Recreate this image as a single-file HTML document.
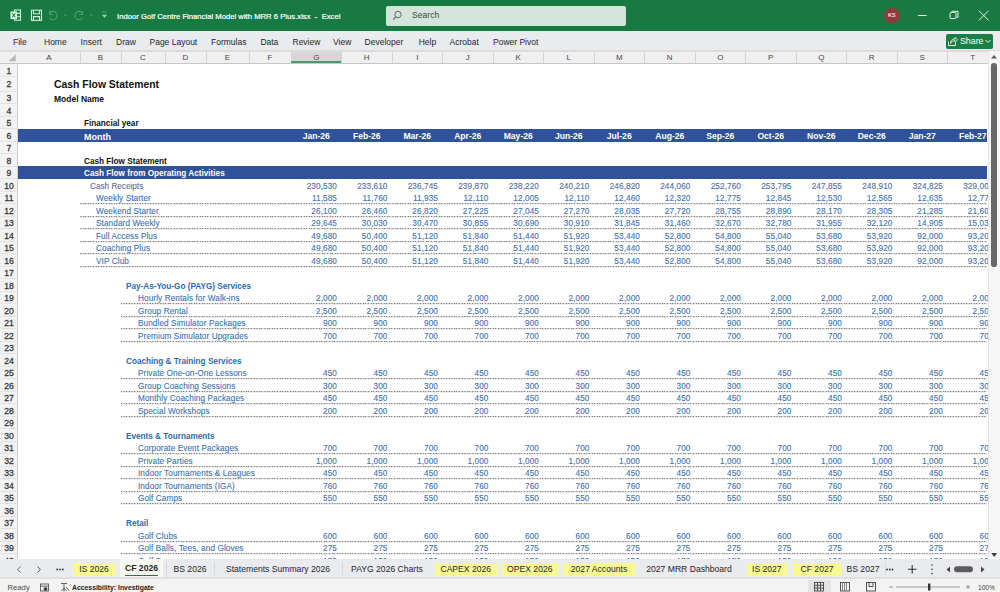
<!DOCTYPE html><html><head><meta charset="utf-8"><style>
*{margin:0;padding:0;box-sizing:border-box}
html,body{width:1000px;height:592px;overflow:hidden;background:#fff;font-family:"Liberation Sans",sans-serif}
.a{position:absolute;white-space:nowrap}
#tb{position:absolute;left:0;top:0;width:1000px;height:31px;background:#187a42}
#rb{position:absolute;left:0;top:31px;width:1000px;height:19px;background:#e9ebef}
#ch{position:absolute;left:0;top:50px;width:1000px;height:14px;background:#f0f0f0;border-top:2px solid #dcdcdc;border-bottom:1px solid #c6c6c6}
#rh{position:absolute;left:0;top:64px;width:18px;height:495px;background:#f3f3f3;border-right:1px solid #cfcfcf}
#sh{position:absolute;left:18px;top:64px;width:970px;height:495px;overflow:hidden;background:#fff}
.rb{font-size:8.5px;color:#262626;top:37px}
.cl{font-size:8px;color:#444;text-align:center;top:52.5px;height:10px;line-height:10px}
.rn{font-size:8.6px;color:#3a3a3a;padding-top:1px;-webkit-text-stroke:0.3px #3a3a3a;text-align:center;width:18px;left:0}
.band{position:absolute;left:0;width:969px;background:#2f529a}
.t{font-size:8.2px;line-height:12.5px;height:12.5px;padding-top:2px}
.title{font-size:10.4px;font-weight:bold;color:#111}
.bk{font-weight:bold;color:#111}
.wh{font-weight:bold;color:#fff}
.gb{color:#63709a;-webkit-text-stroke:0.12px #63709a}
.bl{color:#3f74b4;-webkit-text-stroke:0.12px #3f74b4;letter-spacing:0.1px}
.sh{font-weight:bold;color:#2e6bb0}
.n{font-size:8.2px;line-height:12.5px;height:12.5px;padding-top:2px;text-align:right;color:#4274b2;-webkit-text-stroke:0.12px #4274b2;letter-spacing:0.1px}
.m{font-size:8.6px;line-height:12.5px;height:12.5px;padding-top:1px;text-align:center;color:#fff;font-weight:bold}
.dot{position:absolute;height:1px;background:repeating-linear-gradient(90deg,#858585 0 1px,#d4d4d4 1px 2.6px);box-shadow:0 1px 0 #eeeeee}
#tabs{position:absolute;left:0;top:559px;width:1000px;height:18px;background:#e9ebef}
#sb{position:absolute;left:0;top:579px;width:1000px;height:13px;background:#f3f3f3}
.tab{position:absolute;top:4px;height:13px;line-height:13px;font-size:8.6px;color:#262626;text-align:center}
.y{background:#f6fa8f}
.ng{color:#4f6ea3;-webkit-text-stroke:0.12px #4f6ea3}
</style></head><body>

<div id="tb"></div>
<div class="a" style="left:117px;top:11.5px;font-size:7.7px;color:#fff;-webkit-text-stroke:0.2px #fff;line-height:10px">Indoor Golf Centre Financial Model with MRR 6 Plus.xlsx&nbsp; -&nbsp; Excel</div>
<div class="a" style="left:385.5px;top:5.5px;width:240px;height:20px;background:#d5e4da;border-radius:2px"></div>
<div class="a" style="left:412px;top:10px;font-size:8.6px;color:#3b4a40;line-height:10px">Search</div>
<div class="a" style="left:884px;top:7.5px;width:15.5px;height:15.5px;border-radius:50%;background:#8e3c3a"></div>
<div class="a" style="left:884px;top:11px;width:15.5px;text-align:center;font-size:5.5px;color:#f4dede;line-height:8px;font-weight:bold">KS</div>
<svg class="a" style="left:0;top:0" width="1000" height="31" viewBox="0 0 1000 31">
<g fill="none" stroke="#c9f2d8" stroke-width="1.1">
<rect x="14.5" y="10" width="6" height="10.2"/>
<path d="M14.5 13.4h6M14.5 16.8h6"/>
<rect x="31.5" y="10.2" width="10" height="10.2"/>
<path d="M33.5 10.2v3.6h6v-3.6M33.5 20.4v-3.8h6v3.8"/>
</g>
<rect x="10.5" y="11.5" width="6.5" height="7.5" fill="#d9f7e4"/>
<path d="M12.3 13.3l3 4M15.3 13.3l-3 4" stroke="#1d5e36" stroke-width="1"/>
<g fill="none" stroke="#46a36d" stroke-width="1.1">
<path d="M50 12.5a4.2 4.2 0 1 1 -0.5 5.5M49.5 11v3.5h3.5"/>
<path d="M64 15h3"/>
<path d="M82 12.5a4.2 4.2 0 1 0 0.5 5.5M82.5 11v3.5h-3.5"/>
<path d="M90 15h3"/>
<path d="M102 12h5"/>
</g>
<path d="M101.8 14.8h5.4l-2.7 3z" fill="#8fd8ab"/>
<circle cx="398" cy="14.5" r="3.2" fill="none" stroke="#5b6e62" stroke-width="1"/>
<path d="M395.8 16.8l-2.6 2.8" stroke="#5b6e62" stroke-width="1.1"/>
<path d="M918 15.5h8.5" stroke="#e6f5ec" stroke-width="1"/>
<rect x="950" y="12.5" width="6" height="6" rx="1" fill="none" stroke="#e6f5ec" stroke-width="1"/>
<path d="M952 12.5v-1.2h6v6h-1.5" fill="none" stroke="#e6f5ec" stroke-width="1"/>
<path d="M979 10.8l9.5 9.5M988.5 10.8l-9.5 9.5" stroke="#e6f5ec" stroke-width="1"/>
</svg>
<div id="rb"></div>
<div class="a rb" style="left:13px">File</div>
<div class="a rb" style="left:44px">Home</div>
<div class="a rb" style="left:80.6px">Insert</div>
<div class="a rb" style="left:116px">Draw</div>
<div class="a rb" style="left:149.5px">Page Layout</div>
<div class="a rb" style="left:211px">Formulas</div>
<div class="a rb" style="left:260.4px">Data</div>
<div class="a rb" style="left:292.5px">Review</div>
<div class="a rb" style="left:333px">View</div>
<div class="a rb" style="left:364.6px">Developer</div>
<div class="a rb" style="left:418.7px">Help</div>
<div class="a rb" style="left:449.6px">Acrobat</div>
<div class="a rb" style="left:493px">Power Pivot</div>
<div class="a" style="left:946px;top:33.5px;width:46.5px;height:15px;background:#1a7f45;border-radius:2px"></div>
<div class="a" style="left:960px;top:36px;font-size:8.8px;color:#fff;line-height:10px">Share</div>
<svg class="a" style="left:940px;top:30px" width="60" height="22" viewBox="940 30 60 22">
<path d="M948.5 41.5v4h7v-3" fill="none" stroke="#dff5e7" stroke-width="1"/>
<path d="M950.5 43.5c0-3 2-4.5 4.5-4.5v-1.6l2.6 2.4-2.6 2.4v-1.5c-2 0-3.6.8-4.5 2.8z" fill="none" stroke="#dff5e7" stroke-width="0.9"/>
<path d="M985.5 40l2.5 2.5 2.5-2.5" fill="none" stroke="#dff5e7" stroke-width="1"/>
</svg>
<div id="ch"></div>
<div class="a cl" style="left:18px;width:62px">A</div>
<div class="a" style="left:79.5px;top:52px;width:1px;height:11px;background:#d4d4d4"></div>
<div class="a cl" style="left:80px;width:41px">B</div>
<div class="a" style="left:120.5px;top:52px;width:1px;height:11px;background:#d4d4d4"></div>
<div class="a cl" style="left:121px;width:44px">C</div>
<div class="a" style="left:164.5px;top:52px;width:1px;height:11px;background:#d4d4d4"></div>
<div class="a cl" style="left:165px;width:41px">D</div>
<div class="a" style="left:205.5px;top:52px;width:1px;height:11px;background:#d4d4d4"></div>
<div class="a cl" style="left:206px;width:43px">E</div>
<div class="a" style="left:248.5px;top:52px;width:1px;height:11px;background:#d4d4d4"></div>
<div class="a cl" style="left:249px;width:42px">F</div>
<div class="a" style="left:290.5px;top:52px;width:1px;height:11px;background:#d4d4d4"></div>
<div class="a" style="left:291.0px;top:52px;width:50.5px;height:11px;background:#d9d6d8;border-bottom:2px solid #4a9a6a"></div>
<div class="a cl" style="left:291.0px;width:50.5px">G</div>
<div class="a" style="left:341.0px;top:52px;width:1px;height:11px;background:#d4d4d4"></div>
<div class="a cl" style="left:341.5px;width:50.5px">H</div>
<div class="a" style="left:391.5px;top:52px;width:1px;height:11px;background:#d4d4d4"></div>
<div class="a cl" style="left:392.0px;width:50.5px">I</div>
<div class="a" style="left:442.0px;top:52px;width:1px;height:11px;background:#d4d4d4"></div>
<div class="a cl" style="left:442.5px;width:50.5px">J</div>
<div class="a" style="left:492.5px;top:52px;width:1px;height:11px;background:#d4d4d4"></div>
<div class="a cl" style="left:493.0px;width:50.5px">K</div>
<div class="a" style="left:543.0px;top:52px;width:1px;height:11px;background:#d4d4d4"></div>
<div class="a cl" style="left:543.5px;width:50.5px">L</div>
<div class="a" style="left:593.5px;top:52px;width:1px;height:11px;background:#d4d4d4"></div>
<div class="a cl" style="left:594.0px;width:50.5px">M</div>
<div class="a" style="left:644.0px;top:52px;width:1px;height:11px;background:#d4d4d4"></div>
<div class="a cl" style="left:644.5px;width:50.5px">N</div>
<div class="a" style="left:694.5px;top:52px;width:1px;height:11px;background:#d4d4d4"></div>
<div class="a cl" style="left:695.0px;width:50.5px">O</div>
<div class="a" style="left:745.0px;top:52px;width:1px;height:11px;background:#d4d4d4"></div>
<div class="a cl" style="left:745.5px;width:50.5px">P</div>
<div class="a" style="left:795.5px;top:52px;width:1px;height:11px;background:#d4d4d4"></div>
<div class="a cl" style="left:796.0px;width:50.5px">Q</div>
<div class="a" style="left:846.0px;top:52px;width:1px;height:11px;background:#d4d4d4"></div>
<div class="a cl" style="left:846.5px;width:50.5px">R</div>
<div class="a" style="left:896.5px;top:52px;width:1px;height:11px;background:#d4d4d4"></div>
<div class="a cl" style="left:897.0px;width:50.5px">S</div>
<div class="a" style="left:947.0px;top:52px;width:1px;height:11px;background:#d4d4d4"></div>
<div class="a cl" style="left:947.5px;width:50.5px">T</div>
<div class="a" style="left:997.5px;top:52px;width:1px;height:11px;background:#d4d4d4"></div>
<svg class="a" style="left:0;top:50px" width="18" height="14" viewBox="0 50 18 14"><path d="M8.5 61.2h7.3v-7z" fill="#b9b9b9"/></svg>
<div id="rh"></div>
<div class="a rn" style="top:63.8px;height:12.5px;line-height:12.5px">1</div>
<div class="a" style="left:0;top:75.8px;width:17px;height:1px;background:#e2e2e2"></div>
<div class="a rn" style="top:76.3px;height:15px;line-height:15px">2</div>
<div class="a" style="left:0;top:90.8px;width:17px;height:1px;background:#e2e2e2"></div>
<div class="a rn" style="top:91.3px;height:12.5px;line-height:12.5px">3</div>
<div class="a" style="left:0;top:103.3px;width:17px;height:1px;background:#e2e2e2"></div>
<div class="a rn" style="top:103.8px;height:12.5px;line-height:12.5px">4</div>
<div class="a" style="left:0;top:115.8px;width:17px;height:1px;background:#e2e2e2"></div>
<div class="a rn" style="top:116.3px;height:12.5px;line-height:12.5px">5</div>
<div class="a" style="left:0;top:128.3px;width:17px;height:1px;background:#e2e2e2"></div>
<div class="a rn" style="top:128.8px;height:12.5px;line-height:12.5px">6</div>
<div class="a" style="left:0;top:140.8px;width:17px;height:1px;background:#e2e2e2"></div>
<div class="a rn" style="top:141.3px;height:12.5px;line-height:12.5px">7</div>
<div class="a" style="left:0;top:153.3px;width:17px;height:1px;background:#e2e2e2"></div>
<div class="a rn" style="top:153.8px;height:12.5px;line-height:12.5px">8</div>
<div class="a" style="left:0;top:165.8px;width:17px;height:1px;background:#e2e2e2"></div>
<div class="a rn" style="top:166.3px;height:12.5px;line-height:12.5px">9</div>
<div class="a" style="left:0;top:178.3px;width:17px;height:1px;background:#e2e2e2"></div>
<div class="a rn" style="top:178.8px;height:12.5px;line-height:12.5px">10</div>
<div class="a" style="left:0;top:190.8px;width:17px;height:1px;background:#e2e2e2"></div>
<div class="a rn" style="top:191.3px;height:12.5px;line-height:12.5px">11</div>
<div class="a" style="left:0;top:203.3px;width:17px;height:1px;background:#e2e2e2"></div>
<div class="a rn" style="top:203.8px;height:12.5px;line-height:12.5px">12</div>
<div class="a" style="left:0;top:215.8px;width:17px;height:1px;background:#e2e2e2"></div>
<div class="a rn" style="top:216.3px;height:12.5px;line-height:12.5px">13</div>
<div class="a" style="left:0;top:228.3px;width:17px;height:1px;background:#e2e2e2"></div>
<div class="a rn" style="top:228.8px;height:12.5px;line-height:12.5px">14</div>
<div class="a" style="left:0;top:240.8px;width:17px;height:1px;background:#e2e2e2"></div>
<div class="a rn" style="top:241.3px;height:12.5px;line-height:12.5px">15</div>
<div class="a" style="left:0;top:253.3px;width:17px;height:1px;background:#e2e2e2"></div>
<div class="a rn" style="top:253.8px;height:12.5px;line-height:12.5px">16</div>
<div class="a" style="left:0;top:265.8px;width:17px;height:1px;background:#e2e2e2"></div>
<div class="a rn" style="top:266.3px;height:12.5px;line-height:12.5px">17</div>
<div class="a" style="left:0;top:278.3px;width:17px;height:1px;background:#e2e2e2"></div>
<div class="a rn" style="top:278.8px;height:12.5px;line-height:12.5px">18</div>
<div class="a" style="left:0;top:290.8px;width:17px;height:1px;background:#e2e2e2"></div>
<div class="a rn" style="top:291.3px;height:12.5px;line-height:12.5px">19</div>
<div class="a" style="left:0;top:303.3px;width:17px;height:1px;background:#e2e2e2"></div>
<div class="a rn" style="top:303.8px;height:12.5px;line-height:12.5px">20</div>
<div class="a" style="left:0;top:315.8px;width:17px;height:1px;background:#e2e2e2"></div>
<div class="a rn" style="top:316.3px;height:12.5px;line-height:12.5px">21</div>
<div class="a" style="left:0;top:328.3px;width:17px;height:1px;background:#e2e2e2"></div>
<div class="a rn" style="top:328.8px;height:12.5px;line-height:12.5px">22</div>
<div class="a" style="left:0;top:340.8px;width:17px;height:1px;background:#e2e2e2"></div>
<div class="a rn" style="top:341.3px;height:12.5px;line-height:12.5px">23</div>
<div class="a" style="left:0;top:353.3px;width:17px;height:1px;background:#e2e2e2"></div>
<div class="a rn" style="top:353.8px;height:12.5px;line-height:12.5px">24</div>
<div class="a" style="left:0;top:365.8px;width:17px;height:1px;background:#e2e2e2"></div>
<div class="a rn" style="top:366.3px;height:12.5px;line-height:12.5px">25</div>
<div class="a" style="left:0;top:378.3px;width:17px;height:1px;background:#e2e2e2"></div>
<div class="a rn" style="top:378.8px;height:12.5px;line-height:12.5px">26</div>
<div class="a" style="left:0;top:390.8px;width:17px;height:1px;background:#e2e2e2"></div>
<div class="a rn" style="top:391.3px;height:12.5px;line-height:12.5px">27</div>
<div class="a" style="left:0;top:403.3px;width:17px;height:1px;background:#e2e2e2"></div>
<div class="a rn" style="top:403.8px;height:12.5px;line-height:12.5px">28</div>
<div class="a" style="left:0;top:415.8px;width:17px;height:1px;background:#e2e2e2"></div>
<div class="a rn" style="top:416.3px;height:12.5px;line-height:12.5px">29</div>
<div class="a" style="left:0;top:428.3px;width:17px;height:1px;background:#e2e2e2"></div>
<div class="a rn" style="top:428.8px;height:12.5px;line-height:12.5px">30</div>
<div class="a" style="left:0;top:440.8px;width:17px;height:1px;background:#e2e2e2"></div>
<div class="a rn" style="top:441.3px;height:12.5px;line-height:12.5px">31</div>
<div class="a" style="left:0;top:453.3px;width:17px;height:1px;background:#e2e2e2"></div>
<div class="a rn" style="top:453.8px;height:12.5px;line-height:12.5px">32</div>
<div class="a" style="left:0;top:465.8px;width:17px;height:1px;background:#e2e2e2"></div>
<div class="a rn" style="top:466.3px;height:12.5px;line-height:12.5px">33</div>
<div class="a" style="left:0;top:478.3px;width:17px;height:1px;background:#e2e2e2"></div>
<div class="a rn" style="top:478.8px;height:12.5px;line-height:12.5px">34</div>
<div class="a" style="left:0;top:490.8px;width:17px;height:1px;background:#e2e2e2"></div>
<div class="a rn" style="top:491.3px;height:12.5px;line-height:12.5px">35</div>
<div class="a" style="left:0;top:503.3px;width:17px;height:1px;background:#e2e2e2"></div>
<div class="a rn" style="top:503.8px;height:12.5px;line-height:12.5px">36</div>
<div class="a" style="left:0;top:515.8px;width:17px;height:1px;background:#e2e2e2"></div>
<div class="a rn" style="top:516.3px;height:12.5px;line-height:12.5px">37</div>
<div class="a" style="left:0;top:528.3px;width:17px;height:1px;background:#e2e2e2"></div>
<div class="a rn" style="top:528.8px;height:12.5px;line-height:12.5px">38</div>
<div class="a" style="left:0;top:540.8px;width:17px;height:1px;background:#e2e2e2"></div>
<div class="a rn" style="top:541.3px;height:12.5px;line-height:12.5px">39</div>
<div class="a" style="left:0;top:553.3px;width:17px;height:1px;background:#e2e2e2"></div>
<div class="a rn" style="top:553.8px;height:12.5px;line-height:12.5px">40</div>
<div class="a" style="left:0;top:565.8px;width:17px;height:1px;background:#e2e2e2"></div>
<div id="sh">
<div class="band" style="top:64.80000000000001px;height:13px"></div>
<div class="band" style="top:102.30000000000001px;height:13px"></div>
<div class="dot" style="left:62px;top:139.3px;width:907px"></div>
<div class="dot" style="left:62px;top:151.8px;width:907px"></div>
<div class="dot" style="left:62px;top:164.3px;width:907px"></div>
<div class="dot" style="left:62px;top:176.8px;width:907px"></div>
<div class="dot" style="left:62px;top:189.3px;width:907px"></div>
<div class="dot" style="left:62px;top:201.8px;width:907px"></div>
<div class="dot" style="left:103px;top:239.3px;width:866px"></div>
<div class="dot" style="left:103px;top:251.8px;width:866px"></div>
<div class="dot" style="left:103px;top:264.3px;width:866px"></div>
<div class="dot" style="left:103px;top:276.8px;width:866px"></div>
<div class="dot" style="left:103px;top:314.3px;width:866px"></div>
<div class="dot" style="left:103px;top:326.8px;width:866px"></div>
<div class="dot" style="left:103px;top:339.3px;width:866px"></div>
<div class="dot" style="left:103px;top:351.8px;width:866px"></div>
<div class="dot" style="left:103px;top:389.3px;width:866px"></div>
<div class="dot" style="left:103px;top:401.8px;width:866px"></div>
<div class="dot" style="left:103px;top:414.3px;width:866px"></div>
<div class="dot" style="left:103px;top:426.8px;width:866px"></div>
<div class="dot" style="left:103px;top:439.3px;width:866px"></div>
<div class="dot" style="left:103px;top:476.79999999999995px;width:866px"></div>
<div class="dot" style="left:103px;top:489.29999999999995px;width:866px"></div>
<div class="dot" style="left:103px;top:501.79999999999995px;width:866px"></div>
<div class="a title" style="left:36px;top:12.299999999999997px;line-height:15px;padding-top:1px">Cash Flow Statement</div>
<div class="a t bk" style="left:36px;top:27.299999999999997px"><span style="font-size:8.5px">Model Name</span></div>
<div class="a t bk" style="left:66px;top:52.3px">Financial year</div>
<div class="a t wh" style="left:66px;top:64.80000000000001px"><span style="font-size:9px">Month</span></div>
<div class="a t bk" style="left:66px;top:89.80000000000001px">Cash Flow Statement</div>
<div class="a t wh" style="left:66px;top:102.30000000000001px">Cash Flow from Operating Activities</div>
<div class="a t gb" style="left:72px;top:114.80000000000001px">Cash Receipts</div>
<div class="a t bl" style="left:78px;top:127.30000000000001px">Weekly Starter</div>
<div class="a t bl" style="left:78px;top:139.8px">Weekend Starter</div>
<div class="a t bl" style="left:78px;top:152.3px">Standard Weekly</div>
<div class="a t bl" style="left:78px;top:164.8px">Full Access Plus</div>
<div class="a t bl" style="left:78px;top:177.3px">Coaching Plus</div>
<div class="a t bl" style="left:78px;top:189.8px">VIP Club</div>
<div class="a t sh" style="left:108px;top:214.8px">Pay-As-You-Go (PAYG) Services</div>
<div class="a t bl" style="left:120px;top:227.3px">Hourly Rentals for Walk-ins</div>
<div class="a t bl" style="left:120px;top:239.8px">Group Rental</div>
<div class="a t bl" style="left:120px;top:252.3px">Bundled Simulator Packages</div>
<div class="a t bl" style="left:120px;top:264.8px">Premium Simulator Upgrades</div>
<div class="a t sh" style="left:108px;top:289.8px">Coaching &amp; Training Services</div>
<div class="a t bl" style="left:120px;top:302.3px">Private One-on-One Lessons</div>
<div class="a t bl" style="left:120px;top:314.8px">Group Coaching Sessions</div>
<div class="a t bl" style="left:120px;top:327.3px">Monthly Coaching Packages</div>
<div class="a t bl" style="left:120px;top:339.8px">Special Workshops</div>
<div class="a t sh" style="left:108px;top:364.8px">Events &amp; Tournaments</div>
<div class="a t bl" style="left:120px;top:377.3px">Corporate Event Packages</div>
<div class="a t bl" style="left:120px;top:389.8px">Private Parties</div>
<div class="a t bl" style="left:120px;top:402.3px">Indoor Tournaments &amp; Leagues</div>
<div class="a t bl" style="left:120px;top:414.8px">Indoor Tournaments (IGA)</div>
<div class="a t bl" style="left:120px;top:427.3px">Golf Camps</div>
<div class="a t sh" style="left:108px;top:452.29999999999995px">Retail</div>
<div class="a t bl" style="left:120px;top:464.79999999999995px">Golf Clubs</div>
<div class="a t bl" style="left:120px;top:477.29999999999995px">Golf Balls, Tees, and Gloves</div>
<div class="a t bl" style="left:120px;top:489.79999999999995px">Golf Bags</div>
<div class="a m" style="left:273.0px;top:64.80000000000001px;width:50.5px">Jan-26</div>
<div class="a m" style="left:323.5px;top:64.80000000000001px;width:50.5px">Feb-26</div>
<div class="a m" style="left:374.0px;top:64.80000000000001px;width:50.5px">Mar-26</div>
<div class="a m" style="left:424.5px;top:64.80000000000001px;width:50.5px">Apr-26</div>
<div class="a m" style="left:475.0px;top:64.80000000000001px;width:50.5px">May-26</div>
<div class="a m" style="left:525.5px;top:64.80000000000001px;width:50.5px">Jun-26</div>
<div class="a m" style="left:576.0px;top:64.80000000000001px;width:50.5px">Jul-26</div>
<div class="a m" style="left:626.5px;top:64.80000000000001px;width:50.5px">Aug-26</div>
<div class="a m" style="left:677.0px;top:64.80000000000001px;width:50.5px">Sep-26</div>
<div class="a m" style="left:727.5px;top:64.80000000000001px;width:50.5px">Oct-26</div>
<div class="a m" style="left:778.0px;top:64.80000000000001px;width:50.5px">Nov-26</div>
<div class="a m" style="left:828.5px;top:64.80000000000001px;width:50.5px">Dec-26</div>
<div class="a m" style="left:879.0px;top:64.80000000000001px;width:50.5px">Jan-27</div>
<div class="a m" style="left:929.5px;top:64.80000000000001px;width:50.5px">Feb-27</div>
<div class="a n ng" style="left:273.0px;top:114.80000000000001px;width:46.0px">230,530</div>
<div class="a n ng" style="left:323.5px;top:114.80000000000001px;width:46.0px">233,610</div>
<div class="a n ng" style="left:374.0px;top:114.80000000000001px;width:46.0px">236,745</div>
<div class="a n ng" style="left:424.5px;top:114.80000000000001px;width:46.0px">239,870</div>
<div class="a n ng" style="left:475.0px;top:114.80000000000001px;width:46.0px">238,220</div>
<div class="a n ng" style="left:525.5px;top:114.80000000000001px;width:46.0px">240,210</div>
<div class="a n ng" style="left:576.0px;top:114.80000000000001px;width:46.0px">246,820</div>
<div class="a n ng" style="left:626.5px;top:114.80000000000001px;width:46.0px">244,060</div>
<div class="a n ng" style="left:677.0px;top:114.80000000000001px;width:46.0px">252,760</div>
<div class="a n ng" style="left:727.5px;top:114.80000000000001px;width:46.0px">253,795</div>
<div class="a n ng" style="left:778.0px;top:114.80000000000001px;width:46.0px">247,855</div>
<div class="a n ng" style="left:828.5px;top:114.80000000000001px;width:46.0px">248,910</div>
<div class="a n ng" style="left:879.0px;top:114.80000000000001px;width:46.0px">324,825</div>
<div class="a n ng" style="left:929.5px;top:114.80000000000001px;width:46.0px">329,000</div>
<div class="a n" style="left:273.0px;top:127.30000000000001px;width:46.0px">11,585</div>
<div class="a n" style="left:323.5px;top:127.30000000000001px;width:46.0px">11,760</div>
<div class="a n" style="left:374.0px;top:127.30000000000001px;width:46.0px">11,935</div>
<div class="a n" style="left:424.5px;top:127.30000000000001px;width:46.0px">12,110</div>
<div class="a n" style="left:475.0px;top:127.30000000000001px;width:46.0px">12,005</div>
<div class="a n" style="left:525.5px;top:127.30000000000001px;width:46.0px">12,110</div>
<div class="a n" style="left:576.0px;top:127.30000000000001px;width:46.0px">12,460</div>
<div class="a n" style="left:626.5px;top:127.30000000000001px;width:46.0px">12,320</div>
<div class="a n" style="left:677.0px;top:127.30000000000001px;width:46.0px">12,775</div>
<div class="a n" style="left:727.5px;top:127.30000000000001px;width:46.0px">12,845</div>
<div class="a n" style="left:778.0px;top:127.30000000000001px;width:46.0px">12,530</div>
<div class="a n" style="left:828.5px;top:127.30000000000001px;width:46.0px">12,565</div>
<div class="a n" style="left:879.0px;top:127.30000000000001px;width:46.0px">12,635</div>
<div class="a n" style="left:929.5px;top:127.30000000000001px;width:46.0px">12,770</div>
<div class="a n" style="left:273.0px;top:139.8px;width:46.0px">26,100</div>
<div class="a n" style="left:323.5px;top:139.8px;width:46.0px">26,460</div>
<div class="a n" style="left:374.0px;top:139.8px;width:46.0px">26,820</div>
<div class="a n" style="left:424.5px;top:139.8px;width:46.0px">27,225</div>
<div class="a n" style="left:475.0px;top:139.8px;width:46.0px">27,045</div>
<div class="a n" style="left:525.5px;top:139.8px;width:46.0px">27,270</div>
<div class="a n" style="left:576.0px;top:139.8px;width:46.0px">28,035</div>
<div class="a n" style="left:626.5px;top:139.8px;width:46.0px">27,720</div>
<div class="a n" style="left:677.0px;top:139.8px;width:46.0px">28,755</div>
<div class="a n" style="left:727.5px;top:139.8px;width:46.0px">28,890</div>
<div class="a n" style="left:778.0px;top:139.8px;width:46.0px">28,170</div>
<div class="a n" style="left:828.5px;top:139.8px;width:46.0px">28,305</div>
<div class="a n" style="left:879.0px;top:139.8px;width:46.0px">21,285</div>
<div class="a n" style="left:929.5px;top:139.8px;width:46.0px">21,600</div>
<div class="a n" style="left:273.0px;top:152.3px;width:46.0px">29,645</div>
<div class="a n" style="left:323.5px;top:152.3px;width:46.0px">30,030</div>
<div class="a n" style="left:374.0px;top:152.3px;width:46.0px">30,470</div>
<div class="a n" style="left:424.5px;top:152.3px;width:46.0px">30,855</div>
<div class="a n" style="left:475.0px;top:152.3px;width:46.0px">30,690</div>
<div class="a n" style="left:525.5px;top:152.3px;width:46.0px">30,910</div>
<div class="a n" style="left:576.0px;top:152.3px;width:46.0px">31,845</div>
<div class="a n" style="left:626.5px;top:152.3px;width:46.0px">31,460</div>
<div class="a n" style="left:677.0px;top:152.3px;width:46.0px">32,670</div>
<div class="a n" style="left:727.5px;top:152.3px;width:46.0px">32,780</div>
<div class="a n" style="left:778.0px;top:152.3px;width:46.0px">31,955</div>
<div class="a n" style="left:828.5px;top:152.3px;width:46.0px">32,120</div>
<div class="a n" style="left:879.0px;top:152.3px;width:46.0px">14,905</div>
<div class="a n" style="left:929.5px;top:152.3px;width:46.0px">15,030</div>
<div class="a n" style="left:273.0px;top:164.8px;width:46.0px">49,680</div>
<div class="a n" style="left:323.5px;top:164.8px;width:46.0px">50,400</div>
<div class="a n" style="left:374.0px;top:164.8px;width:46.0px">51,120</div>
<div class="a n" style="left:424.5px;top:164.8px;width:46.0px">51,840</div>
<div class="a n" style="left:475.0px;top:164.8px;width:46.0px">51,440</div>
<div class="a n" style="left:525.5px;top:164.8px;width:46.0px">51,920</div>
<div class="a n" style="left:576.0px;top:164.8px;width:46.0px">53,440</div>
<div class="a n" style="left:626.5px;top:164.8px;width:46.0px">52,800</div>
<div class="a n" style="left:677.0px;top:164.8px;width:46.0px">54,800</div>
<div class="a n" style="left:727.5px;top:164.8px;width:46.0px">55,040</div>
<div class="a n" style="left:778.0px;top:164.8px;width:46.0px">53,680</div>
<div class="a n" style="left:828.5px;top:164.8px;width:46.0px">53,920</div>
<div class="a n" style="left:879.0px;top:164.8px;width:46.0px">92,000</div>
<div class="a n" style="left:929.5px;top:164.8px;width:46.0px">93,200</div>
<div class="a n" style="left:273.0px;top:177.3px;width:46.0px">49,680</div>
<div class="a n" style="left:323.5px;top:177.3px;width:46.0px">50,400</div>
<div class="a n" style="left:374.0px;top:177.3px;width:46.0px">51,120</div>
<div class="a n" style="left:424.5px;top:177.3px;width:46.0px">51,840</div>
<div class="a n" style="left:475.0px;top:177.3px;width:46.0px">51,440</div>
<div class="a n" style="left:525.5px;top:177.3px;width:46.0px">51,920</div>
<div class="a n" style="left:576.0px;top:177.3px;width:46.0px">53,440</div>
<div class="a n" style="left:626.5px;top:177.3px;width:46.0px">52,800</div>
<div class="a n" style="left:677.0px;top:177.3px;width:46.0px">54,800</div>
<div class="a n" style="left:727.5px;top:177.3px;width:46.0px">55,040</div>
<div class="a n" style="left:778.0px;top:177.3px;width:46.0px">53,680</div>
<div class="a n" style="left:828.5px;top:177.3px;width:46.0px">53,920</div>
<div class="a n" style="left:879.0px;top:177.3px;width:46.0px">92,000</div>
<div class="a n" style="left:929.5px;top:177.3px;width:46.0px">93,200</div>
<div class="a n" style="left:273.0px;top:189.8px;width:46.0px">49,680</div>
<div class="a n" style="left:323.5px;top:189.8px;width:46.0px">50,400</div>
<div class="a n" style="left:374.0px;top:189.8px;width:46.0px">51,120</div>
<div class="a n" style="left:424.5px;top:189.8px;width:46.0px">51,840</div>
<div class="a n" style="left:475.0px;top:189.8px;width:46.0px">51,440</div>
<div class="a n" style="left:525.5px;top:189.8px;width:46.0px">51,920</div>
<div class="a n" style="left:576.0px;top:189.8px;width:46.0px">53,440</div>
<div class="a n" style="left:626.5px;top:189.8px;width:46.0px">52,800</div>
<div class="a n" style="left:677.0px;top:189.8px;width:46.0px">54,800</div>
<div class="a n" style="left:727.5px;top:189.8px;width:46.0px">55,040</div>
<div class="a n" style="left:778.0px;top:189.8px;width:46.0px">53,680</div>
<div class="a n" style="left:828.5px;top:189.8px;width:46.0px">53,920</div>
<div class="a n" style="left:879.0px;top:189.8px;width:46.0px">92,000</div>
<div class="a n" style="left:929.5px;top:189.8px;width:46.0px">93,200</div>
<div class="a n" style="left:273.0px;top:227.3px;width:46.0px">2,000</div>
<div class="a n" style="left:323.5px;top:227.3px;width:46.0px">2,000</div>
<div class="a n" style="left:374.0px;top:227.3px;width:46.0px">2,000</div>
<div class="a n" style="left:424.5px;top:227.3px;width:46.0px">2,000</div>
<div class="a n" style="left:475.0px;top:227.3px;width:46.0px">2,000</div>
<div class="a n" style="left:525.5px;top:227.3px;width:46.0px">2,000</div>
<div class="a n" style="left:576.0px;top:227.3px;width:46.0px">2,000</div>
<div class="a n" style="left:626.5px;top:227.3px;width:46.0px">2,000</div>
<div class="a n" style="left:677.0px;top:227.3px;width:46.0px">2,000</div>
<div class="a n" style="left:727.5px;top:227.3px;width:46.0px">2,000</div>
<div class="a n" style="left:778.0px;top:227.3px;width:46.0px">2,000</div>
<div class="a n" style="left:828.5px;top:227.3px;width:46.0px">2,000</div>
<div class="a n" style="left:879.0px;top:227.3px;width:46.0px">2,000</div>
<div class="a n" style="left:929.5px;top:227.3px;width:46.0px">2,000</div>
<div class="a n" style="left:273.0px;top:239.8px;width:46.0px">2,500</div>
<div class="a n" style="left:323.5px;top:239.8px;width:46.0px">2,500</div>
<div class="a n" style="left:374.0px;top:239.8px;width:46.0px">2,500</div>
<div class="a n" style="left:424.5px;top:239.8px;width:46.0px">2,500</div>
<div class="a n" style="left:475.0px;top:239.8px;width:46.0px">2,500</div>
<div class="a n" style="left:525.5px;top:239.8px;width:46.0px">2,500</div>
<div class="a n" style="left:576.0px;top:239.8px;width:46.0px">2,500</div>
<div class="a n" style="left:626.5px;top:239.8px;width:46.0px">2,500</div>
<div class="a n" style="left:677.0px;top:239.8px;width:46.0px">2,500</div>
<div class="a n" style="left:727.5px;top:239.8px;width:46.0px">2,500</div>
<div class="a n" style="left:778.0px;top:239.8px;width:46.0px">2,500</div>
<div class="a n" style="left:828.5px;top:239.8px;width:46.0px">2,500</div>
<div class="a n" style="left:879.0px;top:239.8px;width:46.0px">2,500</div>
<div class="a n" style="left:929.5px;top:239.8px;width:46.0px">2,500</div>
<div class="a n" style="left:273.0px;top:252.3px;width:46.0px">900</div>
<div class="a n" style="left:323.5px;top:252.3px;width:46.0px">900</div>
<div class="a n" style="left:374.0px;top:252.3px;width:46.0px">900</div>
<div class="a n" style="left:424.5px;top:252.3px;width:46.0px">900</div>
<div class="a n" style="left:475.0px;top:252.3px;width:46.0px">900</div>
<div class="a n" style="left:525.5px;top:252.3px;width:46.0px">900</div>
<div class="a n" style="left:576.0px;top:252.3px;width:46.0px">900</div>
<div class="a n" style="left:626.5px;top:252.3px;width:46.0px">900</div>
<div class="a n" style="left:677.0px;top:252.3px;width:46.0px">900</div>
<div class="a n" style="left:727.5px;top:252.3px;width:46.0px">900</div>
<div class="a n" style="left:778.0px;top:252.3px;width:46.0px">900</div>
<div class="a n" style="left:828.5px;top:252.3px;width:46.0px">900</div>
<div class="a n" style="left:879.0px;top:252.3px;width:46.0px">900</div>
<div class="a n" style="left:929.5px;top:252.3px;width:46.0px">900</div>
<div class="a n" style="left:273.0px;top:264.8px;width:46.0px">700</div>
<div class="a n" style="left:323.5px;top:264.8px;width:46.0px">700</div>
<div class="a n" style="left:374.0px;top:264.8px;width:46.0px">700</div>
<div class="a n" style="left:424.5px;top:264.8px;width:46.0px">700</div>
<div class="a n" style="left:475.0px;top:264.8px;width:46.0px">700</div>
<div class="a n" style="left:525.5px;top:264.8px;width:46.0px">700</div>
<div class="a n" style="left:576.0px;top:264.8px;width:46.0px">700</div>
<div class="a n" style="left:626.5px;top:264.8px;width:46.0px">700</div>
<div class="a n" style="left:677.0px;top:264.8px;width:46.0px">700</div>
<div class="a n" style="left:727.5px;top:264.8px;width:46.0px">700</div>
<div class="a n" style="left:778.0px;top:264.8px;width:46.0px">700</div>
<div class="a n" style="left:828.5px;top:264.8px;width:46.0px">700</div>
<div class="a n" style="left:879.0px;top:264.8px;width:46.0px">700</div>
<div class="a n" style="left:929.5px;top:264.8px;width:46.0px">700</div>
<div class="a n" style="left:273.0px;top:302.3px;width:46.0px">450</div>
<div class="a n" style="left:323.5px;top:302.3px;width:46.0px">450</div>
<div class="a n" style="left:374.0px;top:302.3px;width:46.0px">450</div>
<div class="a n" style="left:424.5px;top:302.3px;width:46.0px">450</div>
<div class="a n" style="left:475.0px;top:302.3px;width:46.0px">450</div>
<div class="a n" style="left:525.5px;top:302.3px;width:46.0px">450</div>
<div class="a n" style="left:576.0px;top:302.3px;width:46.0px">450</div>
<div class="a n" style="left:626.5px;top:302.3px;width:46.0px">450</div>
<div class="a n" style="left:677.0px;top:302.3px;width:46.0px">450</div>
<div class="a n" style="left:727.5px;top:302.3px;width:46.0px">450</div>
<div class="a n" style="left:778.0px;top:302.3px;width:46.0px">450</div>
<div class="a n" style="left:828.5px;top:302.3px;width:46.0px">450</div>
<div class="a n" style="left:879.0px;top:302.3px;width:46.0px">450</div>
<div class="a n" style="left:929.5px;top:302.3px;width:46.0px">450</div>
<div class="a n" style="left:273.0px;top:314.8px;width:46.0px">300</div>
<div class="a n" style="left:323.5px;top:314.8px;width:46.0px">300</div>
<div class="a n" style="left:374.0px;top:314.8px;width:46.0px">300</div>
<div class="a n" style="left:424.5px;top:314.8px;width:46.0px">300</div>
<div class="a n" style="left:475.0px;top:314.8px;width:46.0px">300</div>
<div class="a n" style="left:525.5px;top:314.8px;width:46.0px">300</div>
<div class="a n" style="left:576.0px;top:314.8px;width:46.0px">300</div>
<div class="a n" style="left:626.5px;top:314.8px;width:46.0px">300</div>
<div class="a n" style="left:677.0px;top:314.8px;width:46.0px">300</div>
<div class="a n" style="left:727.5px;top:314.8px;width:46.0px">300</div>
<div class="a n" style="left:778.0px;top:314.8px;width:46.0px">300</div>
<div class="a n" style="left:828.5px;top:314.8px;width:46.0px">300</div>
<div class="a n" style="left:879.0px;top:314.8px;width:46.0px">300</div>
<div class="a n" style="left:929.5px;top:314.8px;width:46.0px">300</div>
<div class="a n" style="left:273.0px;top:327.3px;width:46.0px">450</div>
<div class="a n" style="left:323.5px;top:327.3px;width:46.0px">450</div>
<div class="a n" style="left:374.0px;top:327.3px;width:46.0px">450</div>
<div class="a n" style="left:424.5px;top:327.3px;width:46.0px">450</div>
<div class="a n" style="left:475.0px;top:327.3px;width:46.0px">450</div>
<div class="a n" style="left:525.5px;top:327.3px;width:46.0px">450</div>
<div class="a n" style="left:576.0px;top:327.3px;width:46.0px">450</div>
<div class="a n" style="left:626.5px;top:327.3px;width:46.0px">450</div>
<div class="a n" style="left:677.0px;top:327.3px;width:46.0px">450</div>
<div class="a n" style="left:727.5px;top:327.3px;width:46.0px">450</div>
<div class="a n" style="left:778.0px;top:327.3px;width:46.0px">450</div>
<div class="a n" style="left:828.5px;top:327.3px;width:46.0px">450</div>
<div class="a n" style="left:879.0px;top:327.3px;width:46.0px">450</div>
<div class="a n" style="left:929.5px;top:327.3px;width:46.0px">450</div>
<div class="a n" style="left:273.0px;top:339.8px;width:46.0px">200</div>
<div class="a n" style="left:323.5px;top:339.8px;width:46.0px">200</div>
<div class="a n" style="left:374.0px;top:339.8px;width:46.0px">200</div>
<div class="a n" style="left:424.5px;top:339.8px;width:46.0px">200</div>
<div class="a n" style="left:475.0px;top:339.8px;width:46.0px">200</div>
<div class="a n" style="left:525.5px;top:339.8px;width:46.0px">200</div>
<div class="a n" style="left:576.0px;top:339.8px;width:46.0px">200</div>
<div class="a n" style="left:626.5px;top:339.8px;width:46.0px">200</div>
<div class="a n" style="left:677.0px;top:339.8px;width:46.0px">200</div>
<div class="a n" style="left:727.5px;top:339.8px;width:46.0px">200</div>
<div class="a n" style="left:778.0px;top:339.8px;width:46.0px">200</div>
<div class="a n" style="left:828.5px;top:339.8px;width:46.0px">200</div>
<div class="a n" style="left:879.0px;top:339.8px;width:46.0px">200</div>
<div class="a n" style="left:929.5px;top:339.8px;width:46.0px">200</div>
<div class="a n" style="left:273.0px;top:377.3px;width:46.0px">700</div>
<div class="a n" style="left:323.5px;top:377.3px;width:46.0px">700</div>
<div class="a n" style="left:374.0px;top:377.3px;width:46.0px">700</div>
<div class="a n" style="left:424.5px;top:377.3px;width:46.0px">700</div>
<div class="a n" style="left:475.0px;top:377.3px;width:46.0px">700</div>
<div class="a n" style="left:525.5px;top:377.3px;width:46.0px">700</div>
<div class="a n" style="left:576.0px;top:377.3px;width:46.0px">700</div>
<div class="a n" style="left:626.5px;top:377.3px;width:46.0px">700</div>
<div class="a n" style="left:677.0px;top:377.3px;width:46.0px">700</div>
<div class="a n" style="left:727.5px;top:377.3px;width:46.0px">700</div>
<div class="a n" style="left:778.0px;top:377.3px;width:46.0px">700</div>
<div class="a n" style="left:828.5px;top:377.3px;width:46.0px">700</div>
<div class="a n" style="left:879.0px;top:377.3px;width:46.0px">700</div>
<div class="a n" style="left:929.5px;top:377.3px;width:46.0px">700</div>
<div class="a n" style="left:273.0px;top:389.8px;width:46.0px">1,000</div>
<div class="a n" style="left:323.5px;top:389.8px;width:46.0px">1,000</div>
<div class="a n" style="left:374.0px;top:389.8px;width:46.0px">1,000</div>
<div class="a n" style="left:424.5px;top:389.8px;width:46.0px">1,000</div>
<div class="a n" style="left:475.0px;top:389.8px;width:46.0px">1,000</div>
<div class="a n" style="left:525.5px;top:389.8px;width:46.0px">1,000</div>
<div class="a n" style="left:576.0px;top:389.8px;width:46.0px">1,000</div>
<div class="a n" style="left:626.5px;top:389.8px;width:46.0px">1,000</div>
<div class="a n" style="left:677.0px;top:389.8px;width:46.0px">1,000</div>
<div class="a n" style="left:727.5px;top:389.8px;width:46.0px">1,000</div>
<div class="a n" style="left:778.0px;top:389.8px;width:46.0px">1,000</div>
<div class="a n" style="left:828.5px;top:389.8px;width:46.0px">1,000</div>
<div class="a n" style="left:879.0px;top:389.8px;width:46.0px">1,000</div>
<div class="a n" style="left:929.5px;top:389.8px;width:46.0px">1,000</div>
<div class="a n" style="left:273.0px;top:402.3px;width:46.0px">450</div>
<div class="a n" style="left:323.5px;top:402.3px;width:46.0px">450</div>
<div class="a n" style="left:374.0px;top:402.3px;width:46.0px">450</div>
<div class="a n" style="left:424.5px;top:402.3px;width:46.0px">450</div>
<div class="a n" style="left:475.0px;top:402.3px;width:46.0px">450</div>
<div class="a n" style="left:525.5px;top:402.3px;width:46.0px">450</div>
<div class="a n" style="left:576.0px;top:402.3px;width:46.0px">450</div>
<div class="a n" style="left:626.5px;top:402.3px;width:46.0px">450</div>
<div class="a n" style="left:677.0px;top:402.3px;width:46.0px">450</div>
<div class="a n" style="left:727.5px;top:402.3px;width:46.0px">450</div>
<div class="a n" style="left:778.0px;top:402.3px;width:46.0px">450</div>
<div class="a n" style="left:828.5px;top:402.3px;width:46.0px">450</div>
<div class="a n" style="left:879.0px;top:402.3px;width:46.0px">450</div>
<div class="a n" style="left:929.5px;top:402.3px;width:46.0px">450</div>
<div class="a n" style="left:273.0px;top:414.8px;width:46.0px">760</div>
<div class="a n" style="left:323.5px;top:414.8px;width:46.0px">760</div>
<div class="a n" style="left:374.0px;top:414.8px;width:46.0px">760</div>
<div class="a n" style="left:424.5px;top:414.8px;width:46.0px">760</div>
<div class="a n" style="left:475.0px;top:414.8px;width:46.0px">760</div>
<div class="a n" style="left:525.5px;top:414.8px;width:46.0px">760</div>
<div class="a n" style="left:576.0px;top:414.8px;width:46.0px">760</div>
<div class="a n" style="left:626.5px;top:414.8px;width:46.0px">760</div>
<div class="a n" style="left:677.0px;top:414.8px;width:46.0px">760</div>
<div class="a n" style="left:727.5px;top:414.8px;width:46.0px">760</div>
<div class="a n" style="left:778.0px;top:414.8px;width:46.0px">760</div>
<div class="a n" style="left:828.5px;top:414.8px;width:46.0px">760</div>
<div class="a n" style="left:879.0px;top:414.8px;width:46.0px">760</div>
<div class="a n" style="left:929.5px;top:414.8px;width:46.0px">760</div>
<div class="a n" style="left:273.0px;top:427.3px;width:46.0px">550</div>
<div class="a n" style="left:323.5px;top:427.3px;width:46.0px">550</div>
<div class="a n" style="left:374.0px;top:427.3px;width:46.0px">550</div>
<div class="a n" style="left:424.5px;top:427.3px;width:46.0px">550</div>
<div class="a n" style="left:475.0px;top:427.3px;width:46.0px">550</div>
<div class="a n" style="left:525.5px;top:427.3px;width:46.0px">550</div>
<div class="a n" style="left:576.0px;top:427.3px;width:46.0px">550</div>
<div class="a n" style="left:626.5px;top:427.3px;width:46.0px">550</div>
<div class="a n" style="left:677.0px;top:427.3px;width:46.0px">550</div>
<div class="a n" style="left:727.5px;top:427.3px;width:46.0px">550</div>
<div class="a n" style="left:778.0px;top:427.3px;width:46.0px">550</div>
<div class="a n" style="left:828.5px;top:427.3px;width:46.0px">550</div>
<div class="a n" style="left:879.0px;top:427.3px;width:46.0px">550</div>
<div class="a n" style="left:929.5px;top:427.3px;width:46.0px">550</div>
<div class="a n" style="left:273.0px;top:464.79999999999995px;width:46.0px">600</div>
<div class="a n" style="left:323.5px;top:464.79999999999995px;width:46.0px">600</div>
<div class="a n" style="left:374.0px;top:464.79999999999995px;width:46.0px">600</div>
<div class="a n" style="left:424.5px;top:464.79999999999995px;width:46.0px">600</div>
<div class="a n" style="left:475.0px;top:464.79999999999995px;width:46.0px">600</div>
<div class="a n" style="left:525.5px;top:464.79999999999995px;width:46.0px">600</div>
<div class="a n" style="left:576.0px;top:464.79999999999995px;width:46.0px">600</div>
<div class="a n" style="left:626.5px;top:464.79999999999995px;width:46.0px">600</div>
<div class="a n" style="left:677.0px;top:464.79999999999995px;width:46.0px">600</div>
<div class="a n" style="left:727.5px;top:464.79999999999995px;width:46.0px">600</div>
<div class="a n" style="left:778.0px;top:464.79999999999995px;width:46.0px">600</div>
<div class="a n" style="left:828.5px;top:464.79999999999995px;width:46.0px">600</div>
<div class="a n" style="left:879.0px;top:464.79999999999995px;width:46.0px">600</div>
<div class="a n" style="left:929.5px;top:464.79999999999995px;width:46.0px">600</div>
<div class="a n" style="left:273.0px;top:477.29999999999995px;width:46.0px">275</div>
<div class="a n" style="left:323.5px;top:477.29999999999995px;width:46.0px">275</div>
<div class="a n" style="left:374.0px;top:477.29999999999995px;width:46.0px">275</div>
<div class="a n" style="left:424.5px;top:477.29999999999995px;width:46.0px">275</div>
<div class="a n" style="left:475.0px;top:477.29999999999995px;width:46.0px">275</div>
<div class="a n" style="left:525.5px;top:477.29999999999995px;width:46.0px">275</div>
<div class="a n" style="left:576.0px;top:477.29999999999995px;width:46.0px">275</div>
<div class="a n" style="left:626.5px;top:477.29999999999995px;width:46.0px">275</div>
<div class="a n" style="left:677.0px;top:477.29999999999995px;width:46.0px">275</div>
<div class="a n" style="left:727.5px;top:477.29999999999995px;width:46.0px">275</div>
<div class="a n" style="left:778.0px;top:477.29999999999995px;width:46.0px">275</div>
<div class="a n" style="left:828.5px;top:477.29999999999995px;width:46.0px">275</div>
<div class="a n" style="left:879.0px;top:477.29999999999995px;width:46.0px">275</div>
<div class="a n" style="left:929.5px;top:477.29999999999995px;width:46.0px">275</div>
<div class="a n" style="left:273.0px;top:489.79999999999995px;width:46.0px">150</div>
<div class="a n" style="left:323.5px;top:489.79999999999995px;width:46.0px">150</div>
<div class="a n" style="left:374.0px;top:489.79999999999995px;width:46.0px">150</div>
<div class="a n" style="left:424.5px;top:489.79999999999995px;width:46.0px">150</div>
<div class="a n" style="left:475.0px;top:489.79999999999995px;width:46.0px">150</div>
<div class="a n" style="left:525.5px;top:489.79999999999995px;width:46.0px">150</div>
<div class="a n" style="left:576.0px;top:489.79999999999995px;width:46.0px">150</div>
<div class="a n" style="left:626.5px;top:489.79999999999995px;width:46.0px">150</div>
<div class="a n" style="left:677.0px;top:489.79999999999995px;width:46.0px">150</div>
<div class="a n" style="left:727.5px;top:489.79999999999995px;width:46.0px">150</div>
<div class="a n" style="left:778.0px;top:489.79999999999995px;width:46.0px">150</div>
<div class="a n" style="left:828.5px;top:489.79999999999995px;width:46.0px">150</div>
<div class="a n" style="left:879.0px;top:489.79999999999995px;width:46.0px">150</div>
<div class="a n" style="left:929.5px;top:489.79999999999995px;width:46.0px">150</div>
</div>
<div class="a" style="left:988px;top:51px;width:12px;height:507px;background:#f6f6f6;border-left:1px solid #e6e6e6"></div>
<div class="a" style="left:991.3px;top:62.6px;width:5.6px;height:204.7px;border-radius:2.8px;background:#686868"></div>
<svg class="a" style="left:985px;top:50px" width="15" height="510" viewBox="985 50 15 510">
<path d="M991 58.5h6l-3-3.5z" fill="#5a5a5a"/>
<path d="M991.3 553h5.8l-2.9 4z" fill="#3a3a3a"/>
</svg>
<div id="tabs">
<div class="tab y" style="left:73px;width:42px;">IS 2026</div>
<div class="tab" style="left:120px;width:43px;top:0;height:18px;line-height:19px;background:#f7f9f1;font-weight:bold;">CF 2026</div>
<div class="tab" style="left:166px;width:48px;">BS 2026</div>
<div class="tab" style="left:214px;width:128px;">Statements Summary 2026</div>
<div class="tab" style="left:342px;width:90px;">PAYG 2026 Charts</div>
<div class="tab y" style="left:435px;width:61.5px;">CAPEX 2026</div>
<div class="tab y" style="left:502px;width:55.60000000000002px;">OPEX 2026</div>
<div class="tab y" style="left:563px;width:72px;">2027 Accounts</div>
<div class="tab" style="left:635px;width:108px;">2027 MRR Dashboard</div>
<div class="tab y" style="left:746.7px;width:40.299999999999955px;">IS 2027</div>
<div class="tab y" style="left:793px;width:48px;">CF 2027</div>
<div class="tab" style="left:841px;width:44px;">BS 2027</div>
<div class="a" style="left:125px;top:15.5px;width:33px;height:1.3px;background:#1e7a45"></div>
<div class="a" style="left:166px;top:3px;width:1px;height:13px;background:#d6d8dc"></div>
<div class="a" style="left:214px;top:3px;width:1px;height:13px;background:#d6d8dc"></div>
<div class="a" style="left:342px;top:3px;width:1px;height:13px;background:#d6d8dc"></div>
<div class="a" style="left:885px;top:3px;width:1px;height:13px;background:#d6d8dc"></div>
</div>
<div class="a" style="left:0;top:577px;width:1000px;height:2px;background:#e0e0e0"></div>
<div id="sb"></div>
<svg class="a" style="left:0;top:558px" width="1000" height="34" viewBox="0 558 1000 34">
<g fill="none" stroke="#6a6a6a" stroke-width="1">
<path d="M20.5 566.5l-2.8 3 2.8 3"/>
<path d="M37.5 566.5l2.8 3-2.8 3" stroke="#555"/>
<path d="M908 569.3h8.5M912.2 565v8.6" stroke="#333" stroke-width="1.1"/>
</g>
<g fill="#333">
<circle cx="57.2" cy="569.5" r="0.9"/><circle cx="60" cy="569.5" r="0.9"/><circle cx="62.8" cy="569.5" r="0.9"/>
<circle cx="887" cy="569.5" r="0.9"/><circle cx="889.8" cy="569.5" r="0.9"/><circle cx="892.6" cy="569.5" r="0.9"/>
<circle cx="932" cy="565" r="0.8"/><circle cx="932" cy="569.3" r="0.8"/><circle cx="932" cy="573.6" r="0.8"/>
</g>
<path d="M950 566.5v6l-3.5-3z" fill="#444"/>
<path d="M981 566.5v6l3.5-3z" fill="#444"/>
<rect x="954" y="566.3" width="19" height="6" rx="3" fill="#5c5c5c"/>
<g fill="none" stroke="#555" stroke-width="0.9">
<rect x="40.5" y="584" width="8" height="7"/><path d="M40.5 586.2h8"/>
<circle cx="45.5" cy="589" r="1.6" fill="#333"/>
<path d="M61 583.5h6M64 583.5v8M61.5 591l2.5-3 2.5 3M66 587l3 3.5"/>
</g>
<rect x="808" y="580" width="23" height="12" fill="#e3e3e3"/>
<g fill="none" stroke="#444" stroke-width="0.9">
<rect x="814.5" y="582.5" width="9" height="8.5"/><path d="M814.5 585.3h9M814.5 588.1h9M817.5 582.5v8.5M820.5 582.5v8.5"/>
<rect x="840.5" y="582.5" width="9" height="8.5"/><path d="M842.5 582.5v8.5M844.5 582.5v8.5M846.5 582.5v8.5" stroke="#777"/>
<rect x="866.5" y="582.5" width="9" height="8.5"/><path d="M869 582.5v4h4v-4"/>
<path d="M889 587h4M966 587h4M968 585v4" stroke="#888"/>
<path d="M896 587h64" stroke="#888" stroke-width="0.8"/>
</g>
<rect x="928" y="583.5" width="2.4" height="7" fill="#333"/>
</svg>
<div class="a" style="left:7.5px;top:583px;font-size:7.7px;color:#4a4a4a;line-height:10px">Ready</div>
<div class="a" style="left:72px;top:583px;font-size:6.85px;color:#222;font-weight:bold;line-height:10px">Accessibility: Investigate</div>
<div class="a" style="left:978px;top:583px;font-size:6.6px;color:#444;line-height:10px">100%</div>
</body></html>
